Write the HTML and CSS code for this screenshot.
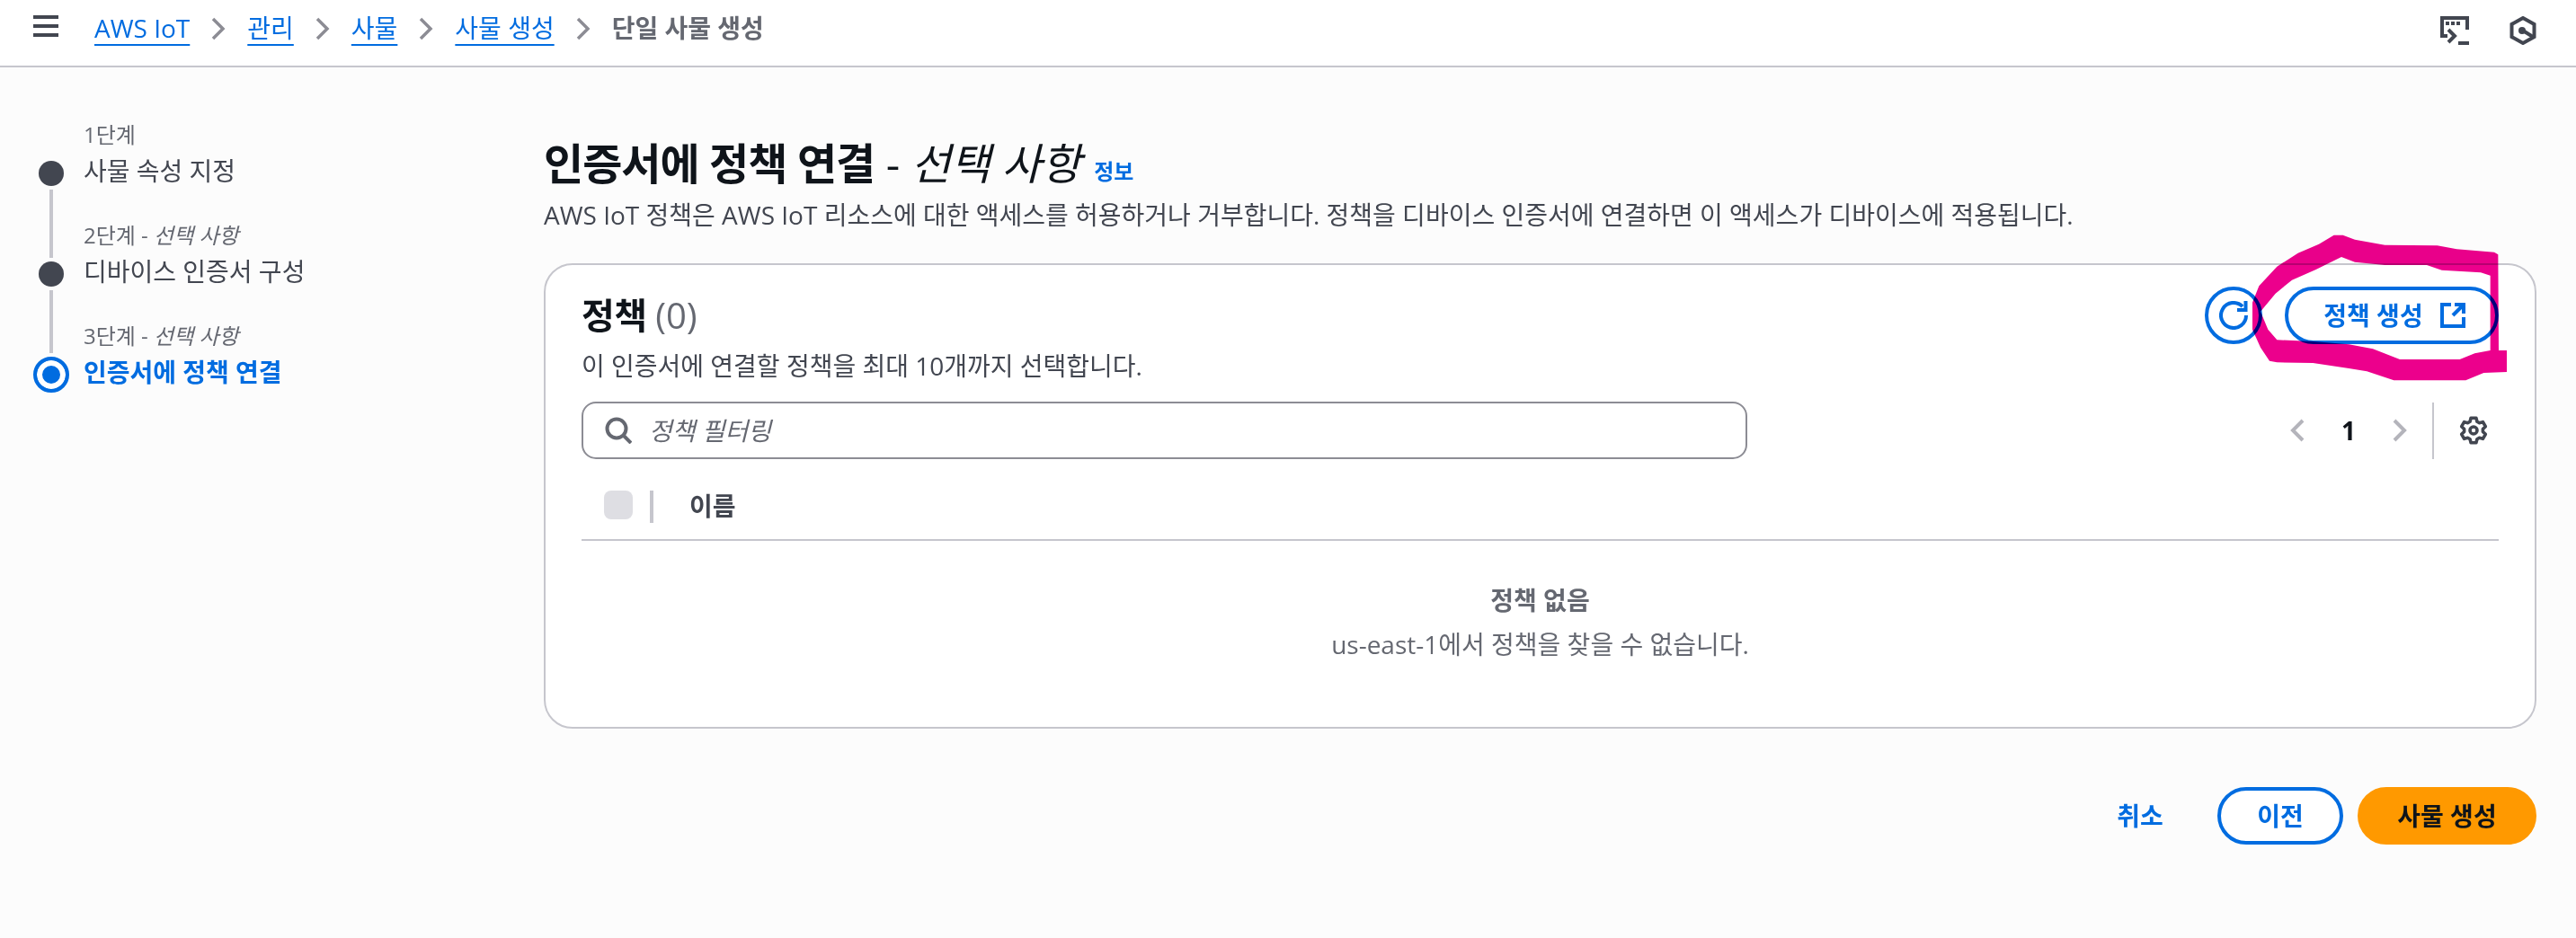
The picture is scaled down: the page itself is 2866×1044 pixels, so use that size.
FILE: index.html
```html
<!DOCTYPE html>
<html lang="ko">
<head>
<meta charset="utf-8">
<title>단일 사물 생성</title>
<link rel="stylesheet" href="styles.css">
</head>
<body>
<header class="topbar">
  <div class="menu-icon"><span></span><span></span><span></span></div>
  <nav class="crumbs">
    <a href="#">AWS IoT</a>
    <svg class="chev" viewBox="0 0 16 26"><path d="M2 2l11 11L2 24"/></svg>
    <a href="#">관리</a>
    <svg class="chev" viewBox="0 0 16 26"><path d="M2 2l11 11L2 24"/></svg>
    <a href="#">사물</a>
    <svg class="chev" viewBox="0 0 16 26"><path d="M2 2l11 11L2 24"/></svg>
    <a href="#">사물 생성</a>
    <svg class="chev" viewBox="0 0 16 26"><path d="M2 2l11 11L2 24"/></svg>
    <span class="crumb-current">단일 사물 생성</span>
  </nav>
  <div class="top-icons">
    <svg class="icon-32 dark-stroke" viewBox="0 0 32 32"><path d="M30 15V2H2v20h6"/><path d="M9 15l7 7-7 7"/><path class="thin-fill" d="M6 6h4v4H6zM12 6h4v4h-4zM18 6h4v4h-4zM20 28h12v4H20z"/></svg>
    <svg class="icon-32 dark-stroke" viewBox="0 0 32 32"><path d="M16 2l12.5 7v14L16 30 3.500 23V9z"/><circle class="thin-fill" cx="15" cy="16" r="4"/><path d="M16 16l11 7"/></svg>
  </div>
</header>

<div class="page">
  <ol class="steps">
    <li class="step">
      <span class="step-rail"></span>
      <span class="step-label">1단계</span>
      <span class="dot"></span>
      <span class="step-title">사물 속성 지정</span>
    </li>
    <li class="step">
      <span class="step-rail line"></span>
      <span class="step-label">2단계 - <i>선택 사항</i></span>
      <span class="dot"></span>
      <span class="step-title">디바이스 인증서 구성</span>
    </li>
    <li class="step">
      <span class="step-rail line short"></span>
      <span class="step-label">3단계 - <i>선택 사항</i></span>
      <span class="dot current"></span>
      <span class="step-title active">인증서에 정책 연결</span>
    </li>
  </ol>

  <main class="content">
    <h1 class="page-title"><span class="title-strong">인증서에 정책 연결</span> <span class="title-rest">- <i>선택 사항</i></span> <a class="info" href="#">정보</a></h1>
    <p class="page-desc">AWS IoT 정책은 AWS IoT 리소스에 대한 액세스를 허용하거나 거부합니다. 정책을 디바이스 인증서에 연결하면 이 액세스가 디바이스에 적용됩니다.</p>

    <section class="card">
      <div class="card-head">
        <div>
          <h2 class="card-title">정책 <span class="count">(0)</span></h2>
          <p class="card-desc">이 인증서에 연결할 정책을 최대 10개까지 선택합니다.</p>
        </div>
        <div class="card-actions">
          <button class="btn round">
            <svg class="icon-32 blue-stroke" viewBox="0 0 32 32"><path d="M26 6.200A14 14 0 1 0 30 16"/><path d="M29.500 0V10H20"/></svg>
          </button>
          <button class="btn outline create">정책 생성
            <svg class="icon-28 blue-stroke" viewBox="0 0 28 28"><path d="M12 2H2v24h24V16"/><path d="M14 14L26 2"/><path d="M16 2h10v10"/></svg>
          </button>
        </div>
      </div>

      <div class="tools">
        <div class="search">
          <svg class="icon-30 grey-stroke" viewBox="0 0 30 30"><circle cx="13" cy="13" r="10.500"/><path d="M20.500 20.500L29 29"/></svg>
          <span class="placeholder">정책 필터링</span>
        </div>
        <div class="pager">
          <svg class="pg" viewBox="0 0 16 26"><path d="M14 2L3 13l11 11"/></svg>
          <span class="pg-num">1</span>
          <svg class="pg" viewBox="0 0 16 26"><path d="M2 2l11 11L2 24"/></svg>
          <span class="pg-sep"></span>
          <svg class="icon-32 gear" viewBox="0 0 32 32"><path d="M13.090 2.310H18.910L19.930 6.270L22.470 7.730L26.400 6.630L29.310 11.670L26.400 14.540V17.460L29.310 20.330L26.400 25.370L22.470 24.270L19.930 25.730L18.910 29.690H13.090L12.070 25.730L9.530 24.270L5.600 25.370L2.690 20.330L5.600 17.460V14.540L2.690 11.670L5.600 6.630L9.530 7.730L12.070 6.270Z"/><circle cx="16" cy="16" r="4"/></svg>
        </div>
      </div>

      <div class="table-head">
        <span class="check"></span>
        <span class="col-sep"></span>
        <span class="col-name">이름</span>
      </div>

      <div class="empty">
        <strong>정책 없음</strong>
        <span>us-east-1에서 정책을 찾을 수 없습니다.</span>
      </div>

      <svg class="scribble" viewBox="0 0 1398 900"><path fill-rule="evenodd" d="M1167 450L1140 450L1138 130L1125 122L1000 112L935 100L760 98L660 80L620 65L590 65L540 95L470 125L400 170L340 235L318 290L318 380L345 440L375 485L400 490L520 492L640 510L700 520L790 550L1030 550L1090 525L1167 522ZM1112 450L1112 200L1080 190L950 182L900 165L760 165L660 155L615 138L530 180L450 215L395 260L345 320L370 380L400 415L520 420L640 430L720 445L810 480L1010 480L1060 460Z"/></svg>
    </section>

    <div class="footer-actions">
      <button class="btn link">취소</button>
      <button class="btn outline prev">이전</button>
      <button class="btn primary">사물 생성</button>
    </div>
  </main>
</div>
</body>
</html>
```
FILE: styles.css
```css
* { box-sizing: border-box; }
html, body { margin: 0; padding: 0; }
body {
  width: 2866px;
  height: 1044px;
  overflow: hidden;
  background: #fcfcfc;
  color: #0f141a;
  font-family: "Open Sans", "Noto Sans CJK KR", "Noto Sans", sans-serif;
  font-size: 28px;
  line-height: 36px;
}
a { color: #006ce0; }

.topbar {
  height: 75px;
  background: #fff;
  border-bottom: 2px solid #c6c6cd;
  display: flex;
  align-items: flex-start;
  padding: 17px 43px 0 37px;
}
.menu-icon { width: 28px; height: 24px; display: flex; flex-direction: column; justify-content: space-between; margin-right: 40px; }
.menu-icon span { height: 4px; background: #424650; }
.crumbs { display: flex; align-items: center; height: 32px; flex: 1; gap: 24px; margin-top: -2px; }
.crumbs a { text-decoration: underline; text-decoration-thickness: 2px; text-underline-offset: 7px; white-space: nowrap; }
.chev { width: 16px; height: 26px; flex: none; fill: none; stroke: #8c8c94; stroke-width: 3.500; margin-top: 2px; }
.crumb-current { font-weight: 700; color: #656871; }
.top-icons { display: flex; gap: 44px; padding-top: 1px; }
.icon-32 { width: 32px; height: 32px; flex: none; }
.icon-28 { width: 28px; height: 28px; flex: none; }
.icon-30 { width: 30px; height: 30px; flex: none; }
.dark-stroke, .blue-stroke, .grey-stroke, .gear { fill: none; stroke-width: 4; }
.dark-stroke { stroke: #424650; }
.dark-stroke .thin-fill { fill: #424650; stroke: none; }
.blue-stroke { stroke: #006ce0; }
.grey-stroke { stroke: #656871; }

.page { display: flex; align-items: flex-start; }

.steps { list-style: none; margin: 0; padding: 24px 0 0 37px; width: 605px; flex: none; }
.step {
  display: grid;
  grid-template-columns: 40px 1fr;
  grid-template-rows: 76px 36px;
  column-gap: 16px;
}
.step-rail { justify-self: center; width: 4px; }
.step-rail.line { background: #c6c6cd; }
.step-rail.short { height: 70px; }
.step-label { align-self: end; margin-bottom: 9px; font-size: 24px; line-height: 32px; color: #656871; }
.step-title { color: #424650; margin-top: -3px; }
.step-title.active { color: #006ce0; font-weight: 700; }
.dot { width: 28px; height: 28px; border-radius: 50%; background: #424650; align-self: center; justify-self: center; }
.dot.current {
  width: 40px; height: 40px;
  background: #006ce0;
  border: 4px solid #006ce0;
  box-shadow: inset 0 0 0 6px #fff;
}

.content { width: 2217px; padding-top: 79px; }
.page-title { margin: 0; font-size: 48px; line-height: 56px; font-weight: 700; white-space: nowrap; }
.title-strong { letter-spacing: -1px; }
.title-rest { font-weight: 400; }
.info { font-size: 24px; line-height: 32px; font-weight: 700; font-style: normal; text-decoration: none; margin-left: 2px; }
.page-desc { margin: 0; padding-top: 11px; color: #424650; white-space: nowrap; }

.card {
  position: relative;
  margin-top: 36px;
  height: 518px;
  background: #fff;
  border: 2px solid #c6c6cd;
  border-radius: 32px;
  padding: 24px 40px 0;
}
.card-head { display: flex; justify-content: space-between; align-items: flex-start; height: 128px; }
.card-title { margin: 0; padding-top: 8px; font-size: 40px; line-height: 48px; font-weight: 700; letter-spacing: -0.6px; }
.count { font-weight: 400; color: #656871; letter-spacing: 0; }
.card-desc { margin: 14px 0 0; color: #424650; }
.card-actions { display: flex; gap: 25px; }

.btn {
  font: inherit;
  font-weight: 700;
  height: 64px;
  border-radius: 32px;
  background: transparent;
  border: 4px solid transparent;
  color: #006ce0;
  padding: 0;
  display: flex;
  align-items: center;
  justify-content: center;
}
.btn.round { width: 64px; border-color: #006ce0; background: #fff; }
.btn.outline { border-color: #006ce0; background: #fff; }
.btn.create { width: 238px; gap: 19px; padding-left: 6px; }
.btn.prev { width: 140px; }
.btn.link { width: 140px; }
.btn.primary { width: 199px; background: #ff9900; border-color: #ff9900; color: #0f141a; }

.tools { display: flex; justify-content: space-between; align-items: center; }
.search {
  width: 1297px;
  height: 64px;
  border: 2px solid #8c8c94;
  border-radius: 16px;
  display: flex;
  align-items: center;
  gap: 19px;
  padding-left: 24px;
}
.placeholder { font-style: italic; color: #656871; }
.pager { display: flex; align-items: center; height: 64px; padding-right: 12px; }
.pg { width: 16px; height: 26px; fill: none; stroke: #b4b4bb; stroke-width: 4; }
.pg-num { font-weight: 700; width: 98px; text-align: center; }
.pg-sep { width: 2px; height: 63px; background: #c6c6cd; margin: 0 28px; }
.gear { stroke: #424650; stroke-width: 3.600; stroke-linejoin: round; }

.table-head {
  display: flex;
  align-items: flex-start;
  height: 91px;
  padding: 35px 0 0 25px;
  border-bottom: 2px solid #c6c6cd;
}
.check { width: 32px; height: 32px; border-radius: 8px; background: #dedee3; }
.col-sep { width: 4px; height: 36px; background: #c6c6cd; margin: 0 40px 0 19px; }
.col-name { font-weight: 700; color: #424650; margin-top: -1px; }

.empty { display: flex; flex-direction: column; align-items: center; padding-top: 48px; gap: 13px; color: #656871; }
.empty strong { font-weight: 700; }

.scribble {
  position: absolute;
  left: 1793px;
  top: -55px;
  width: 466px;
  height: 300px;
  fill: #ec008c;
  mix-blend-mode: multiply;
  pointer-events: none;
}

.footer-actions { display: flex; justify-content: flex-end; gap: 16px; margin-top: 65px; }
```
